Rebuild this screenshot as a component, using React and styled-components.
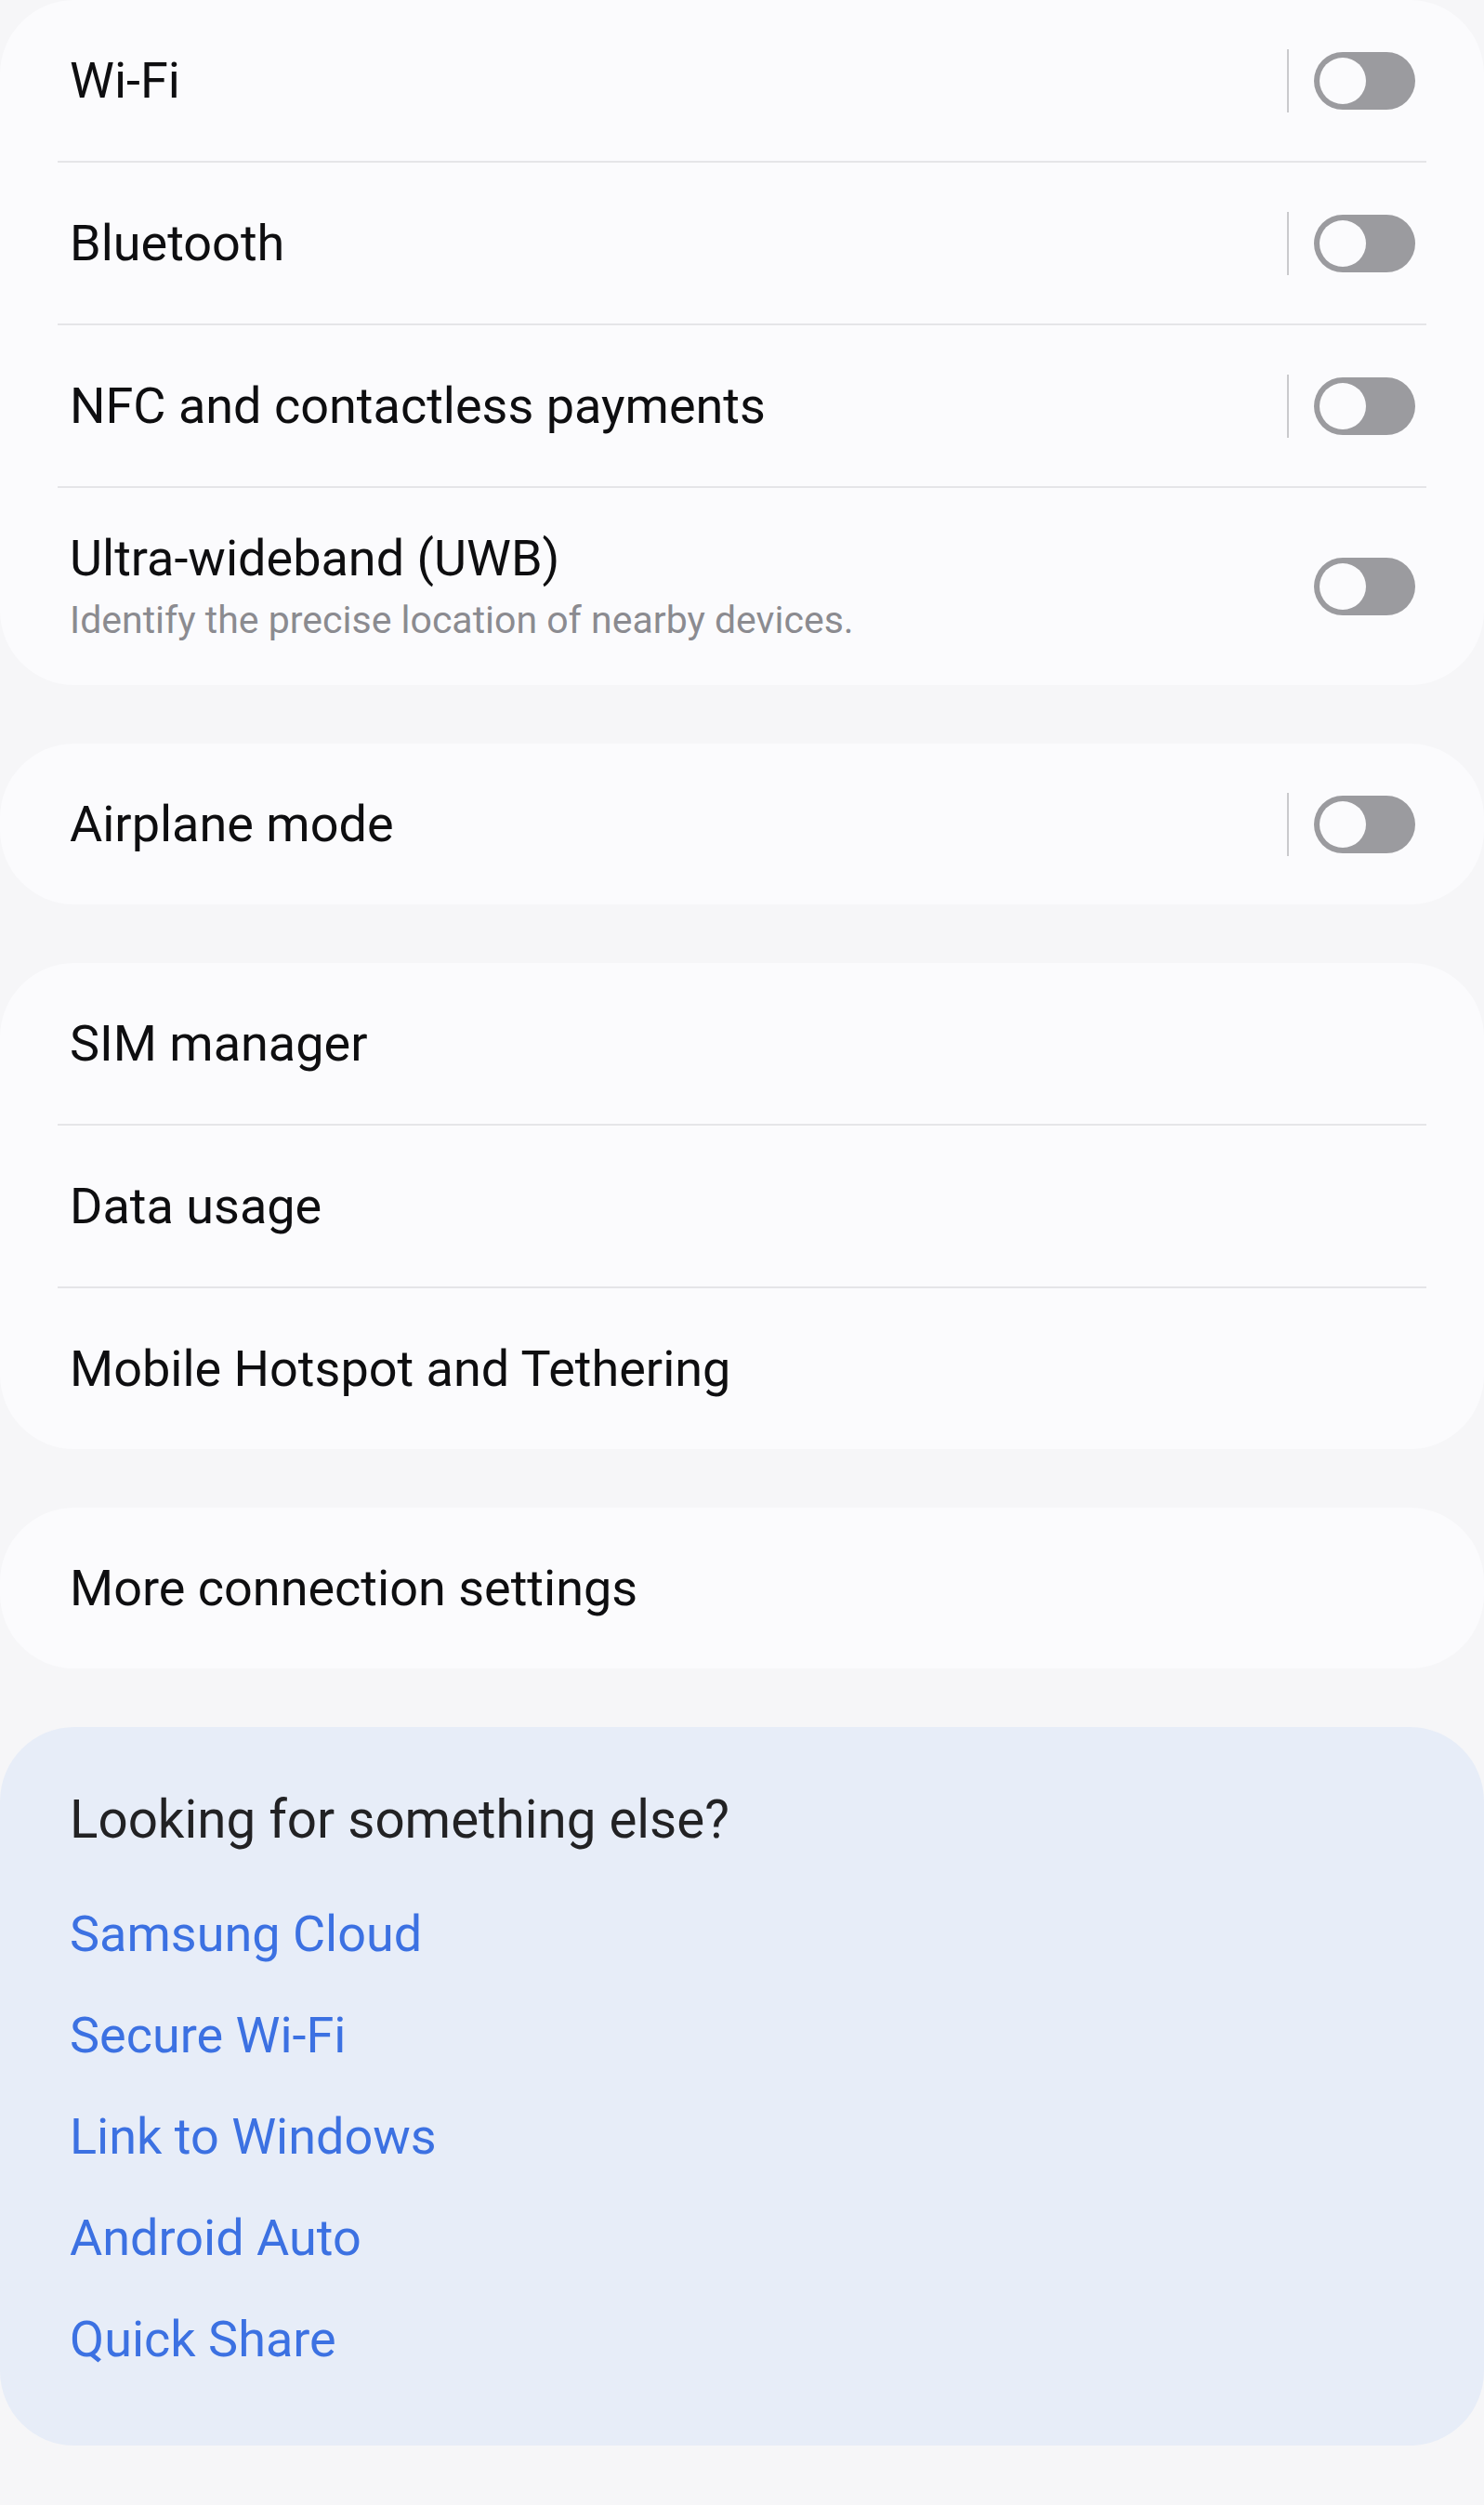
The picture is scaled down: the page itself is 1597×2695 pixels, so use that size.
import React from 'react'
import styled, { createGlobalStyle } from 'styled-components'

const GlobalStyle = createGlobalStyle`
  html, body {
    margin: 0;
    padding: 0;
    background: #f6f6f8;
  }
  body {
    font-family: Roboto, "Noto Sans", sans-serif;
  }
`

const Page = styled.div`
  display: flex;
  flex-direction: column;
  gap: 63px;
  min-height: 2695px;
  background: #f6f6f8;
`

const Card = styled.section`
  display: flex;
  flex-direction: column;
  background: ${p => (p.tint ? '#e7edf8' : '#fbfbfd')};
  border-radius: 80px;
`

const Row = styled.div`
  display: flex;
  align-items: center;
  height: ${p => (p.tall ? 212 : 173)}px;
  padding: 0 74px 0 75px;
  box-sizing: border-box;
`

const TextBlock = styled.div`
  flex: 1;
  display: flex;
  flex-direction: column;
  gap: 10px;
`

const Title = styled.div`
  font-size: 54px;
  line-height: 62px;
  color: #0e0e10;
`

const Subtitle = styled.div`
  font-size: 41px;
  line-height: 50px;
  color: #8b8b90;
`

const Divider = styled.div`
  height: 2px;
  margin: 0 62px;
  background: #e5e5e8;
`

const SwitchArea = styled.div`
  display: flex;
  align-items: center;
  gap: 27px;
`

const VLine = styled.div`
  width: 2px;
  height: 68px;
  background: #cacacd;
`

const Track = styled.div`
  width: 109px;
  height: 62px;
  border-radius: 31px;
  background: #9b9b9f;
  display: flex;
  align-items: center;
  padding: 0 6px;
  box-sizing: border-box;
`

const Knob = styled.div`
  width: 50px;
  height: 50px;
  border-radius: 50%;
  background: #fbfbfd;
`

const Suggest = styled.div`
  display: flex;
  flex-direction: column;
  padding: 68px 75px 60px;
`

const Heading = styled.div`
  font-size: 56.5px;
  line-height: 64px;
  color: #222224;
  margin-bottom: 36px;
`

const LinkItem = styled.a`
  display: block;
  font-size: 54px;
  line-height: 109px;
  height: 109px;
  color: #3c71e2;
  text-decoration: none;
`

function Switch({ divider = true }) {
  return (
    <SwitchArea>
      {divider && <VLine />}
      <Track>
        <Knob />
      </Track>
    </SwitchArea>
  )
}

function SettingRow({ title, subtitle, toggle, divider }) {
  return (
    <Row tall={!!subtitle}>
      <TextBlock>
        <Title>{title}</Title>
        {subtitle && <Subtitle>{subtitle}</Subtitle>}
      </TextBlock>
      {toggle && <Switch divider={divider} />}
    </Row>
  )
}

function Group({ items }) {
  return (
    <Card>
      {items.map((it, i) => (
        <React.Fragment key={it.title}>
          {i > 0 && <Divider />}
          <SettingRow {...it} />
        </React.Fragment>
      ))}
    </Card>
  )
}

const links = ['Samsung Cloud', 'Secure Wi-Fi', 'Link to Windows', 'Android Auto', 'Quick Share']

export default function App() {
  return (
    <>
      <GlobalStyle />
      <Page>
        <Group
          items={[
            { title: 'Wi-Fi', toggle: true, divider: true },
            { title: 'Bluetooth', toggle: true, divider: true },
            { title: 'NFC and contactless payments', toggle: true, divider: true },
            {
              title: 'Ultra-wideband (UWB)',
              subtitle: 'Identify the precise location of nearby devices.',
              toggle: true,
              divider: false,
            },
          ]}
        />
        <Group items={[{ title: 'Airplane mode', toggle: true, divider: true }]} />
        <Group
          items={[
            { title: 'SIM manager' },
            { title: 'Data usage' },
            { title: 'Mobile Hotspot and Tethering' },
          ]}
        />
        <Group items={[{ title: 'More connection settings' }]} />
        <Card tint>
          <Suggest>
            <Heading>Looking for something else?</Heading>
            {links.map(l => (
              <LinkItem key={l} href="#">{l}</LinkItem>
            ))}
          </Suggest>
        </Card>
      </Page>
    </>
  )
}
